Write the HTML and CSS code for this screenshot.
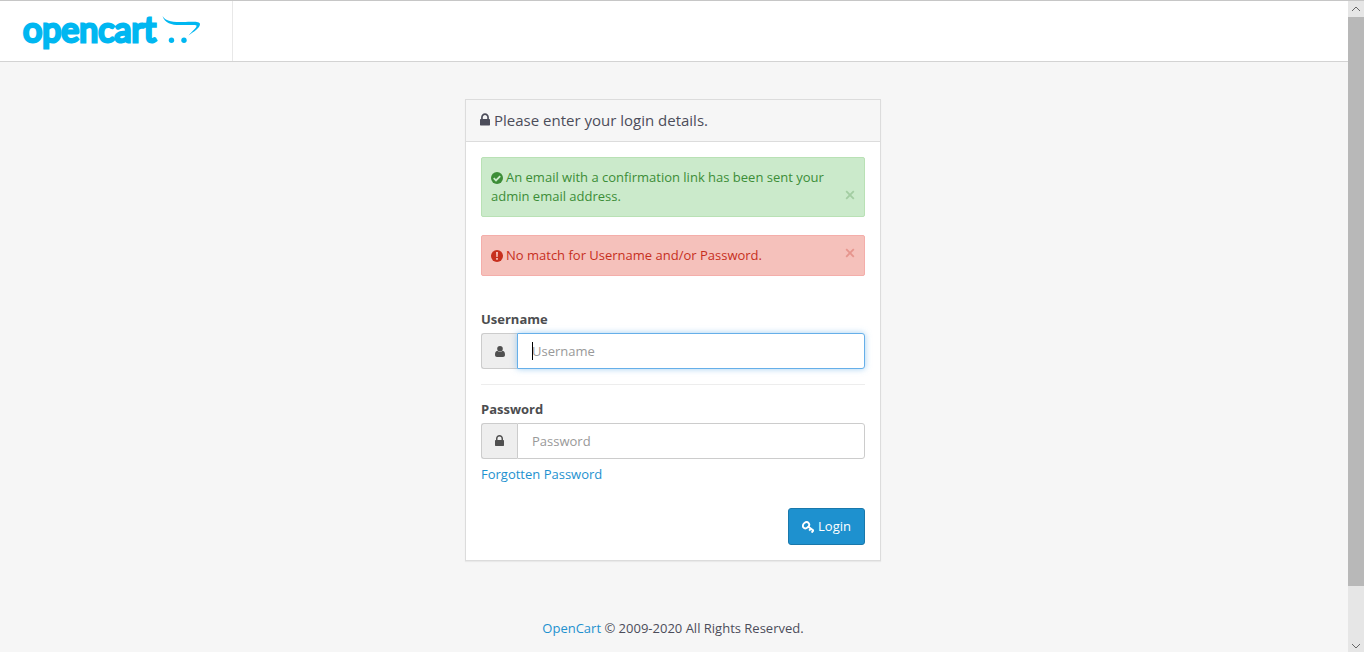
FILE: index.html
```
<!DOCTYPE html>
<html lang="en">
<head>
<meta charset="utf-8">
<title>Administration</title>
<link rel="stylesheet" href="styles.css">
</head>
<body>
<svg class="sprite" aria-hidden="true">
  <symbol id="lock" viewBox="0 0 1152 1536"><path d="M320 640h512V448q0-106-75-181t-181-75-181 75-75 181zM1152 736v576q0 40-28 68t-68 28H96q-40 0-68-28t-28-68V736q0-40 28-68t68-28h32V448q0-184 132-316T576 0t316 132 132 316v192h32q40 0 68 28t28 68z"/></symbol>
  <symbol id="close" viewBox="0 0 10 10"><path d="M1.2 1.2l7.600 7.600M8.800 1.200l-7.600 7.600" fill="none" stroke="currentColor" stroke-width="1.800"/></symbol>
</svg>
<div class="page">
  <header class="header">
    <a class="brand" href="#">
      <span class="wordmark">opencart</span>
      <svg class="cart" viewBox="0 0 40 30" aria-hidden="true">
        <path d="M1.500 0C4 7.500 11 9.300 20 9.100C29 9 34.500 8.800 35.500 9.500C36 12 31 15 27.500 19.500C33 15.500 39 12 39 8C39 5 31 5.800 22 6C13 6 5 5.800 1.500 0Z"/>
        <circle cx="10.500" cy="24.300" r="2.700"/><circle cx="23" cy="24.300" r="2.700"/>
      </svg>
    </a>
  </header>
  <main class="content">
    <section class="panel">
      <h1 class="panel-heading"><svg class="icon-lock"><use href="#lock"/></svg><span>Please enter your login details.</span></h1>
      <div class="panel-body">
        <div class="alert success">
          <p><svg class="icon-status" viewBox="0 0 12 12"><circle cx="6" cy="6" r="6"/><path d="M2.700 6.200l2.300 2.200 4.200-4.200" fill="none" stroke="#cbeacb" stroke-width="1.800"/></svg>An email with a confirmation link has been sent your admin email address.</p>
          <button class="close" type="button" aria-label="Close"><svg><use href="#close"/></svg></button>
        </div>
        <div class="alert danger">
          <p><svg class="icon-status" viewBox="0 0 12 12"><circle cx="6" cy="6" r="6"/><path d="M5 2h2l-.3 5H5.300zM5.100 8h1.800v1.800H5.100z" fill="#f5c1bb"/></svg>No match for Username and/or Password.</p>
          <button class="close" type="button" aria-label="Close"><svg><use href="#close"/></svg></button>
        </div>
        <form class="form">
          <div class="field">
            <label for="username">Username</label>
            <div class="group">
              <span class="addon"><svg class="icon-user" viewBox="0 0 10 11"><circle cx="5" cy="2.800" r="2.800"/><path d="M2.400 4.800C.6 5.100 0 6.600 0 8.800C0 10.200.8 11 2 11H8c1.200 0 2-.8 2-2.200C10 6.600 9.400 5.100 7.600 4.800A3.800 3.800 0 0 1 2.400 4.800z"/></svg></span>
              <div class="control focused"><input id="username" type="text" placeholder="Username"><i class="caret"></i></div>
            </div>
          </div>
          <div class="field second">
            <label for="password">Password</label>
            <div class="group">
              <span class="addon"><svg class="icon-small-lock"><use href="#lock"/></svg></span>
              <div class="control"><input id="password" type="password" placeholder="Password"></div>
            </div>
            <a class="forgotten" href="#">Forgotten Password</a>
          </div>
          <button class="login" type="submit"><svg class="icon-key" viewBox="0 0 12 12"><ellipse cx="4" cy="4.200" rx="3.400" ry="2.700" transform="rotate(-40 4 4.200)" fill="none" stroke="currentColor" stroke-width="1.900"/><path d="M6 5.400L12 10M7.200 9.600L9 7.400M9.600 11.600L11.600 9.200" fill="none" stroke="currentColor" stroke-width="1.900"/></svg><span>Login</span></button>
        </form>
      </div>
    </section>
  </main>
  <footer class="footer"><a href="#">OpenCart</a> © 2009-2020 All Rights Reserved.</footer>
</div>
<div class="scrollbar" aria-hidden="true">
  <svg class="arrow" viewBox="0 0 16 16"><path d="M4 10l4-4 4 4"/></svg>
  <div class="track"><div class="thumb"></div></div>
  <svg class="arrow" viewBox="0 0 16 16"><path d="M4 8l4 4 4-4"/></svg>
</div>
</body>
</html>
```
FILE: styles.css
```
* { box-sizing: border-box; }
body {
  margin: 0;
  min-height: 100vh;
  display: flex;
  border-top: 1px solid #c6c6c6;
  background: #f6f6f6;
  color: #4c4d5a;
  font: 13px/19px "Open Sans", sans-serif;
}
svg { fill: currentColor; }
a { color: #1e91cf; text-decoration: none; }
button, input { font: inherit; }
.sprite { position: absolute; width: 0; height: 0; }
.page { flex: 1; min-width: 0; }
.header { display: flex; height: 61px; background: #fff; border-bottom: 1px solid #d3d3d3; }
.brand { display: flex; justify-content: space-between; width: 233px; padding: 9px 31px 0 23px; border-right: 1px solid #e8e8e8; color: #00b7f1; }
.wordmark { font: 400 34px/38px Lato, sans-serif; -webkit-text-stroke: 3px currentColor; }
.cart { flex: none; width: 40px; height: 30px; margin-top: 6px; }
.content { padding: 37px 2px 0 0; }
.panel { width: 100%; max-width: 416px; margin: 0 auto; background: #fff; border: 1px solid #dcdcdc; box-shadow: 0 1px 1px #0000000d; }
.panel-heading { display: flex; align-items: center; gap: 4px; margin: 0; padding: 10px 14px 11px; border-bottom: 1px solid #dcdcdc; background: #f6f6f6; font-size: 15px; font-weight: 400; line-height: 20px; }
.icon-lock { width: 10px; height: 14px; }
.panel-body { padding: 15px; }
.alert { display: flex; align-items: center; justify-content: space-between; padding: 10px 9px; margin-bottom: 18px; border: 1px solid; border-radius: 2px; }
.alert p { margin: 0; }
.success { background: #cbeacb; border-color: #b9e1b5; color: #3c8d37; }
.success .close { margin-top: 15px; color: #a3cda2; }
.danger { background: #f5c1bb; border-color: #f4aeaa; color: #c72f1d; }
.danger .close { margin-bottom: 5px; color: #e6958d; }
.icon-status { width: 12px; height: 12px; margin-right: 3px; vertical-align: -2px; }
.close { display: flex; flex: none; padding: 0; border: 0; background: none; }
.close svg { width: 10px; height: 10px; }
.form { padding-top: 16px; }
.field label { display: block; margin-bottom: 4px; color: #4c4d4f; font-weight: 700; }
.second { margin-top: 15px; padding-top: 15px; border-top: 1px solid #ededed; }
.group { display: flex; height: 36px; }
.addon { display: flex; align-items: center; justify-content: center; width: 36px; border: 1px solid #ccc; border-right: 0; border-radius: 3px 0 0 3px; background: #eee; color: #505050; }
.icon-user { width: 10px; height: 11px; }
.icon-small-lock { width: 9px; height: 12px; }
.control { position: relative; flex: 1; border: 1px solid #ccc; border-radius: 0 3px 3px 0; background: #fff; }
.control input { width: 100%; height: 100%; padding: 0 14px; border: 0; outline: 0; background: none; color: #555; }
.control input::placeholder { color: #999; opacity: 1; }
.focused { border-color: #66afe9; box-shadow: 0 0 6px #66afe999; }
.caret { position: absolute; top: 8px; left: 14px; width: 1px; height: 18px; background: #000; }
.forgotten { display: block; width: fit-content; margin-top: 6px; }
.login { display: flex; align-items: center; gap: 4px; margin: 24px 0 0 auto; padding: 8px 13px; border: 1px solid #1978ab; border-radius: 3px; background: #1e91cf; color: #fff; }
.icon-key { width: 12px; height: 12px; }
.footer { padding: 58px 2px 14px 0; text-align: center; }
.scrollbar { display: flex; flex-direction: column; width: 16px; background: #e6e6e6; color: #666; }
.arrow { width: 16px; height: 16px; fill: none; stroke: currentColor; stroke-width: 1px; }
.track { flex: 1; }
.thumb { height: 92%; background: #b8b8b8; }
```
